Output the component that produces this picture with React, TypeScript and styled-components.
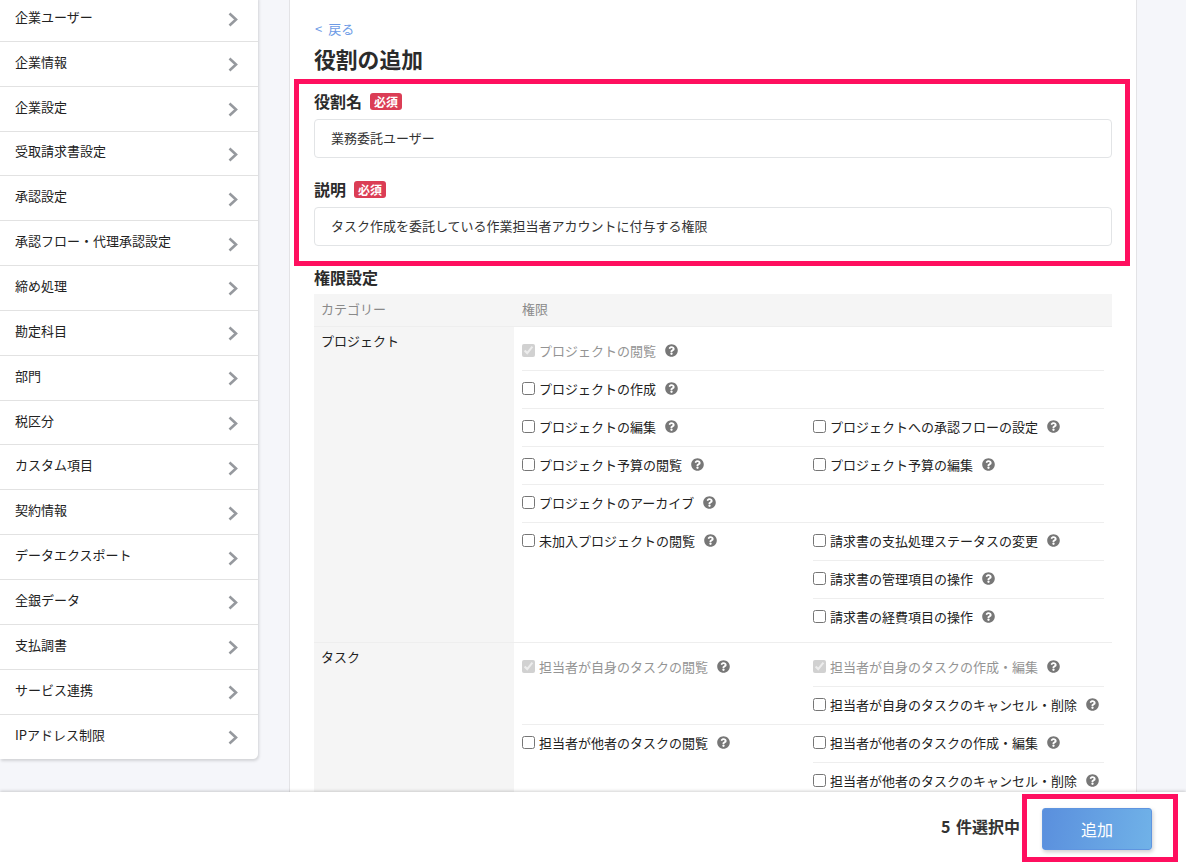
import React from "react";
import styled, { createGlobalStyle } from "styled-components";
import { FaQuestionCircle } from "react-icons/fa";

const Global = createGlobalStyle`
  html, body { margin: 0; height: 100%; overflow: hidden; }
  body { background: #f5f6fa; font-family: "Noto Sans CJK JP", "Noto Sans", sans-serif; color: #222; font-size: 13px; }
  * { box-sizing: border-box; }
`;

const Page = styled.div`
  position: relative;
  display: grid;
  grid-template-rows: 792px 70px;
  height: 862px;
  overflow: hidden;
`;
const Viewport = styled.div`
  display: grid;
  grid-template-columns: 258px 1fr;
  overflow: hidden;
  align-items: start;
`;
const Sidebar = styled.nav`
  margin-top: -3px;
  background: #fff;
  border-radius: 0 0 5px 0;
  box-shadow: 1px 2px 3px rgba(0, 0, 0, 0.14);
`;
const SideRow = styled.div`
  height: 44.85px;
  display: flex;
  align-items: center;
  justify-content: space-between;
  padding: 0 20px 0 15px;
  border-bottom: 1px solid #e2e2e2;
  line-height: 18px;
  color: #222;
  &:last-child { border-bottom: none; }
`;
const SideText = styled.span`
  margin-bottom: 4px;
`;
const Chevron = styled.svg`
  width: 10px;
  height: 15px;
  margin-top: 2px;
  fill: none;
  stroke: #96999e;
  stroke-width: 2.6;
`;
const Card = styled.main`
  margin: -20px 0 0 31px;
  width: 848px;
  background: #fff;
  border-left: 1px solid #e3e3e6;
  border-right: 1px solid #e3e3e6;
  padding: 40px 24px 0;
`;
const Back = styled.a`
  display: block;
  margin-left: 1px;
  color: #6d9be6;
  font-size: 13px;
  line-height: 18px;
  word-spacing: 3px;
`;
const Title = styled.h1`
  margin: 5px 0 0;
  font-size: 21.8px;
  line-height: 32px;
  font-weight: 700;
  color: #2b2b2b;
`;
const Field = styled.div`
  margin-top: 15px;
  & + & { margin-top: 20px; }
`;
const Label = styled.div`
  display: flex;
  align-items: center;
  gap: 8px;
  font-size: 16px;
  line-height: 22px;
  font-weight: 700;
  color: #2b2b2b;
`;
const Badge = styled.span`
  width: 32px;
  height: 17px;
  border-radius: 3px;
  background: #db3d55;
  color: #fff;
  font-size: 12px;
  line-height: 17px;
  font-weight: 700;
  text-align: center;
`;
const TextInput = styled.input`
  display: block;
  width: 100%;
  height: 39px;
  margin-top: 7px;
  padding: 0 16px 2px;
  border: 1px solid #e2e4e6;
  border-radius: 4px;
  background: #fff;
  font: inherit;
  font-size: 13px;
  color: #333;
  outline: none;
`;
const SectionTitle = styled.h2`
  margin: 20px 0 0;
  font-size: 16px;
  line-height: 22px;
  font-weight: 700;
  color: #2b2b2b;
`;
const Table = styled.div`
  margin-top: 6px;
`;
const HeadRow = styled.div`
  display: grid;
  grid-template-columns: 200px 1fr;
  height: 33px;
  background: #f5f5f5;
  border-bottom: 1px solid #eee;
  color: #8a8a8a;
  line-height: 30px;
`;
const HeadCell = styled.div<{ $inner?: boolean }>`
  padding-left: ${(p) => (p.$inner ? "8px" : "7px")};
`;
const Group = styled.section`
  display: grid;
  grid-template-columns: 200px 1fr;
  border-bottom: 1px solid #eee;
`;
const Category = styled.div`
  background: #f5f5f5;
  padding: 5px 7px;
  line-height: 18px;
  color: #222;
`;
const Perms = styled.div`
  padding: 6px 8px 6px;
`;
const Row = styled.div`
  display: grid;
  grid-template-columns: 291px 1fr;
  border-bottom: 1px solid #eee;
  &:last-child { border-bottom: none; }
`;
const Cell = styled.div``;
const Item = styled.label<{ $off?: boolean }>`
  display: flex;
  align-items: center;
  height: 38px;
  padding-bottom: 2px;
  border-bottom: 1px solid #eee;
  color: ${(p) => (p.$off ? "#949494" : "#222")};
  line-height: 18px;
  &:last-child { height: 37px; border-bottom: none; }
`;
const Check = styled.input`
  width: 13px;
  height: 13px;
  margin: 0 4px 0 0;
  accent-color: #c9c9c9;
`;
const Help = styled(FaQuestionCircle)`
  width: 13px;
  height: 13px;
  margin-left: 9px;
  color: #777;
`;
const Footer = styled.footer`
  position: relative;
  display: flex;
  align-items: center;
  justify-content: flex-end;
  gap: 22px;
  padding: 4px 34px 0 0;
  background: #fff;
  box-shadow: 0 -1px 3px rgba(0, 0, 0, 0.18);
`;
const Count = styled.div`
  margin-bottom: 7px;
  font-size: 16px;
  line-height: 22px;
  font-weight: 700;
  color: #333;
  word-spacing: 2px;
`;
const AddButton = styled.button`
  width: 110px;
  height: 42px;
  border: 1px solid #5f95e0;
  border-radius: 3px;
  background: linear-gradient(100deg, #5a8fdd, #70b2e8);
  box-shadow: 1px 2px 4px rgba(0, 0, 0, 0.2);
  color: #fff;
  font: inherit;
  font-size: 16px;
`;
const Highlight = styled.div<{ $x: number; $y: number; $w: number; $h: number }>`
  position: absolute;
  left: ${(p) => p.$x}px;
  top: ${(p) => p.$y}px;
  width: ${(p) => p.$w}px;
  height: ${(p) => p.$h}px;
  border: 5px solid #ff0f5f;
  pointer-events: none;
`;

type P = { t: string; off?: boolean };
const Perm = ({ t, off }: P) => (
  <Item $off={off}>
    <Check type="checkbox" checked={!!off} disabled={off} readOnly />
    {t}
    <Help />
  </Item>
);

const side = ["企業ユーザー","企業情報","企業設定","受取請求書設定","承認設定","承認フロー・代理承認設定","締め処理","勘定科目","部門","税区分","カスタム項目","契約情報","データエクスポート","全銀データ","支払調書","サービス連携","IPアドレス制限"];

const project: P[][][] = [
  [[{ t: "プロジェクトの閲覧", off: true }], []],
  [[{ t: "プロジェクトの作成" }], []],
  [[{ t: "プロジェクトの編集" }], [{ t: "プロジェクトへの承認フローの設定" }]],
  [[{ t: "プロジェクト予算の閲覧" }], [{ t: "プロジェクト予算の編集" }]],
  [[{ t: "プロジェクトのアーカイブ" }], []],
  [[{ t: "未加入プロジェクトの閲覧" }], [{ t: "請求書の支払処理ステータスの変更" }, { t: "請求書の管理項目の操作" }, { t: "請求書の経費項目の操作" }]],
];
const task: P[][][] = [
  [[{ t: "担当者が自身のタスクの閲覧", off: true }], [{ t: "担当者が自身のタスクの作成・編集", off: true }, { t: "担当者が自身のタスクのキャンセル・削除" }]],
  [[{ t: "担当者が他者のタスクの閲覧" }], [{ t: "担当者が他者のタスクの作成・編集" }, { t: "担当者が他者のタスクのキャンセル・削除" }]],
];

const PermGroup = ({ name, rows }: { name: string; rows: P[][][] }) => (
  <Group>
    <Category>{name}</Category>
    <Perms>
      {rows.map((r, i) => (
        <Row key={i}>
          {r.map((c, j) => (
            <Cell key={j}>
              {c.map((p) => <Perm key={p.t} {...p} />)}
            </Cell>
          ))}
        </Row>
      ))}
    </Perms>
  </Group>
);

export default function App() {
  return (
    <Page>
      <Global />
      <Viewport>
        <Sidebar>
          {side.map((s) => (
            <SideRow key={s}>
              <SideText>{s}</SideText>
              <Chevron viewBox="0 0 10 15"><path d="M1.5 1.5 8 7.5 1.5 13.5" /></Chevron>
            </SideRow>
          ))}
        </Sidebar>
        <Card>
          <Back>&lt; 戻る</Back>
          <Title>役割の追加</Title>
          <Field>
            <Label>役割名<Badge>必須</Badge></Label>
            <TextInput readOnly value="業務委託ユーザー" />
          </Field>
          <Field>
            <Label>説明<Badge>必須</Badge></Label>
            <TextInput readOnly value="タスク作成を委託している作業担当者アカウントに付与する権限" />
          </Field>
          <SectionTitle>権限設定</SectionTitle>
          <Table>
            <HeadRow>
              <HeadCell>カテゴリー</HeadCell>
              <HeadCell $inner>権限</HeadCell>
            </HeadRow>
            <PermGroup name="プロジェクト" rows={project} />
            <PermGroup name="タスク" rows={task} />
          </Table>
        </Card>
      </Viewport>
      <Footer>
        <Count>5 件選択中</Count>
        <AddButton>追加</AddButton>
      </Footer>
      <Highlight $x={294} $y={79} $w={836} $h={187} />
      <Highlight $x={1022} $y={794} $w={156} $h={68} />
    </Page>
  );
}
